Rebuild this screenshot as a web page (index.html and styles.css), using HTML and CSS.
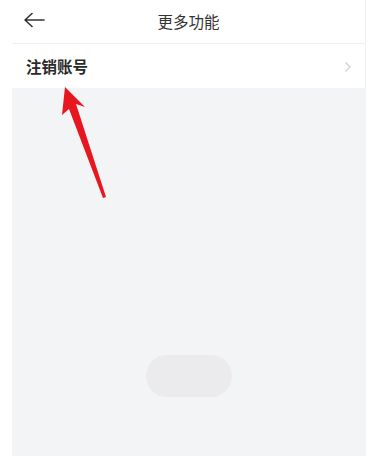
FILE: index.html
```html
<!DOCTYPE html>
<html lang="zh">
<head>
<meta charset="utf-8">
<link rel="stylesheet" href="styles.css">
</head>
<body>
<div class="screen">
  <header class="nav">
    <span class="back">
      <svg width="22" height="16" viewBox="0 0 22 16"><path d="M9 1.5 L2 8 L9 14.5 M2 8 H21" fill="none" stroke="#333" stroke-width="1.6" stroke-linecap="round" stroke-linejoin="round"/></svg>
    </span>
    <h1 class="title">更多功能</h1>
  </header>
  <div class="row">
    <span class="row-label">注销账号</span>
    <svg class="chev" width="8" height="12" viewBox="0 0 8 12"><path d="M1.5 1.5 L6 6 L1.5 10.5" fill="none" stroke="#cfcfcf" stroke-width="1.3"/></svg>
  </div>
  <main class="content">
    <div class="pill"></div>
  </main>
  <svg class="arrow" width="375" height="456" viewBox="0 0 375 456">
    <polygon points="65,87 85,107 76,104 106,197 103,198 69,109 62,115" fill="#e8161e"/>
  </svg>
</div>
</body>
</html>
```
FILE: styles.css
```css
html, body {
  margin: 0;
  padding: 0;
  background: #ffffff;
}
.screen {
  position: relative;
  width: 375px;
  height: 456px;
  overflow: hidden;
  box-sizing: border-box;
  padding: 0 9px 0 12px;
  display: flex;
  flex-direction: column;
  font-family: "Noto Sans CJK SC", "Noto Sans", sans-serif;
}
.nav {
  height: 43px;
  display: flex;
  align-items: center;
  justify-content: center;
  position: relative;
  border-bottom: 1px solid #f0f0f0;
  border-right: 1px solid #f0f0f0;
}
.back {
  position: absolute;
  left: 11px;
  top: 12px;
  display: flex;
}
.title {
  margin: 0 0 2px 0;
  font-size: 15.5px;
  font-weight: 400;
  color: #333;
}
.row {
  height: 44px;
  display: flex;
  align-items: center;
  justify-content: space-between;
  padding: 0 13px 0 14px;
  border-right: 1px solid #f0f0f0;
}
.row-label {
  font-size: 15.5px;
  font-weight: 700;
  color: #2a2a2a;
}
.chev {
  margin-top: 1px;
}
.content {
  flex: 1;
  background: #f3f4f6;
  display: flex;
  justify-content: center;
  padding-top: 267px;
}
.pill {
  width: 86px;
  height: 42px;
  border-radius: 21px;
  background: #ebebed;
}
.arrow {
  position: absolute;
  left: 0;
  top: 0;
}
```
